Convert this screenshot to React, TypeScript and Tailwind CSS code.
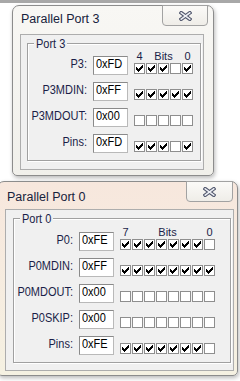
import React from "react";

const UI = "'Liberation Sans',Arial,sans-serif";

const CHECK_ROWS = [
  "......#",
  ".....##",
  "#...###",
  "##.###.",
  "#####..",
  ".###...",
  "..#....",
];
const CHECK_PATH = CHECK_ROWS.map((row, y) =>
  row
    .split("")
    .map((c, x) => (c === "#" ? `M${x} ${y}h1v1h-1z` : ""))
    .join("")
).join("");

function Box({ on }: { on: boolean }) {
  return (
    <div className="w-[11px] h-[11px] border border-[#8e8e8e] bg-white flex items-center justify-center">
      {on && (
        <svg width="7" height="7" viewBox="0 0 7 7" shapeRendering="crispEdges">
          <path d={CHECK_PATH} fill="#000" />
        </svg>
      )}
    </div>
  );
}

function CloseGlyph() {
  return (
    <svg width="13" height="10" viewBox="0 0 13 10">
      <path d="M2.2 1.8 L10.8 8.2 M10.8 1.8 L2.2 8.2" stroke="#50566c" strokeWidth="3.6" strokeLinecap="square" />
      <path d="M2.2 1.8 L10.8 8.2 M10.8 1.8 L2.2 8.2" stroke="#eef0f5" strokeWidth="1.5" strokeLinecap="square" />
    </svg>
  );
}

function Tall({ children }: { children: React.ReactNode }) {
  return <span className="inline-block scale-y-[1.15]">{children}</span>;
}

type RowData = { label: string; value: string; bits: boolean[] };

function Row({ row, header }: { row: RowData; header?: [string, string] }) {
  return (
    <div className="flex items-end">
      <div className="w-[59px] h-[19px] pt-[1px] text-right text-[11px] leading-[13px] text-[#1a1e48] whitespace-nowrap">
        <Tall>{row.label}</Tall>
      </div>
      <div className="ml-[6px] w-[35px] h-[19px] bg-white border border-t-[#8a8a8a] border-l-[#8a8a8a] border-b-[#b9b9b9] border-r-[#b9b9b9] pl-[2px] text-[11px] leading-[13px] text-black overflow-hidden whitespace-nowrap">
        <Tall>{row.value}</Tall>
      </div>
      <div className="ml-[6px] flex flex-col pb-[1px]">
        {header && (
          <div className="h-[12px] mb-[1px] flex justify-between text-[11px] leading-[12px] text-[#1a1e48]">
            <span className="w-[11px] text-center">{header[0]}</span>
            <span>Bits</span>
            <span className="w-[11px] text-center">{header[1]}</span>
          </div>
        )}
        <div className="flex gap-[1px]">
          {row.bits.map((b, i) => (
            <Box key={i} on={b} />
          ))}
        </div>
      </div>
    </div>
  );
}

function Window(props: {
  className: string;
  titleCls: string;
  closeCls: string;
  clientCls: string;
  groupCls: string;
  title: string;
  groupLabel: string;
  header: [string, string];
  rows: RowData[];
}) {
  return (
    <div
      className={`absolute flex flex-col border border-[#8c8c8c] rounded-t-[7px] rounded-b-[5px] shadow-[1px_2px_4px_rgba(0,0,0,0.28)] ${props.className}`}
      style={{ fontFamily: UI }}
    >
      <div className={`relative text-[12.5px] leading-[15px] text-[#17223c] ${props.titleCls}`}>
        <span>{props.title}</span>
        <div
          className={`absolute -top-[1px] h-[21px] border border-[#a2a2a2] rounded-b-[4px] bg-linear-to-b from-[#fbfaf8] to-[#efede8] flex items-center justify-center ${props.closeCls}`}
        >
          <CloseGlyph />
        </div>
      </div>
      <div className={`border border-[#adadad] bg-[#f0f0f0] ${props.clientCls}`}>
        <div
          className={`relative border border-[#a0a0a0] shadow-[inset_1px_1px_0_#fff,1px_1px_0_#fff] ${props.groupCls}`}
        >
          <span className="absolute -top-[7px] left-[6px] px-[2px] bg-[#f0f0f0] text-[11px] leading-[13px] text-[#1a1e48]">
            <Tall>{props.groupLabel}</Tall>
          </span>
          <div className="flex flex-col gap-[7px]">
            {props.rows.map((r, i) => (
              <Row key={r.label} row={r} header={i === 0 ? props.header : undefined} />
            ))}
          </div>
        </div>
      </div>
    </div>
  );
}

const T = true;
const F = false;

export default function App() {
  return (
    <div className="relative w-[240px] h-[381px] overflow-hidden bg-white">
      <div className="h-[3px] bg-[#a8a8a8]" />
      <Window
        className="left-[12px] top-[5px] w-[202px] bg-linear-to-b from-[#f8f7f4] to-[#f1f0eb]"
        titleCls="h-[28px] pl-[8px] pt-[6px]"
        closeCls="right-[5px] w-[46px]"
        clientCls="ml-[7px] mr-[9px] mb-[5px]"
        groupCls="ml-[6px] mr-[2px] mt-[8px] mb-[8px] pt-[6px] pb-[7px]"
        title="Parallel Port 3"
        groupLabel="Port 3"
        header={["4", "0"]}
        rows={[
          { label: "P3:", value: "0xFD", bits: [T, T, T, F, T] },
          { label: "P3MDIN:", value: "0xFF", bits: [T, T, T, T, T] },
          { label: "P3MDOUT:", value: "0x00", bits: [F, F, F, F, F] },
          { label: "Pins:", value: "0xFD", bits: [T, T, T, F, T] },
        ]}
      />
      <Window
        className="-left-[3px] top-[181px] w-[241px] bg-linear-to-b from-[#f7e7dd] to-[#f5f1e2]"
        titleCls="h-[27px] pl-[9px] pt-[8px]"
        closeCls="right-[4px] w-[47px]"
        clientCls="ml-[7px] mr-[3px] mb-[4px]"
        groupCls="ml-[7px] mr-[2px] mt-[8px] mb-[7px] pt-[7px] pb-[7px]"
        title="Parallel Port 0"
        groupLabel="Port 0"
        header={["7", "0"]}
        rows={[
          { label: "P0:", value: "0xFE", bits: [T, T, T, T, T, T, T, F] },
          { label: "P0MDIN:", value: "0xFF", bits: [T, T, T, T, T, T, T, T] },
          { label: "P0MDOUT:", value: "0x00", bits: [F, F, F, F, F, F, F, F] },
          { label: "P0SKIP:", value: "0x00", bits: [F, F, F, F, F, F, F, F] },
          { label: "Pins:", value: "0xFE", bits: [T, T, T, T, T, T, T, F] },
        ]}
      />
    </div>
  );
}
